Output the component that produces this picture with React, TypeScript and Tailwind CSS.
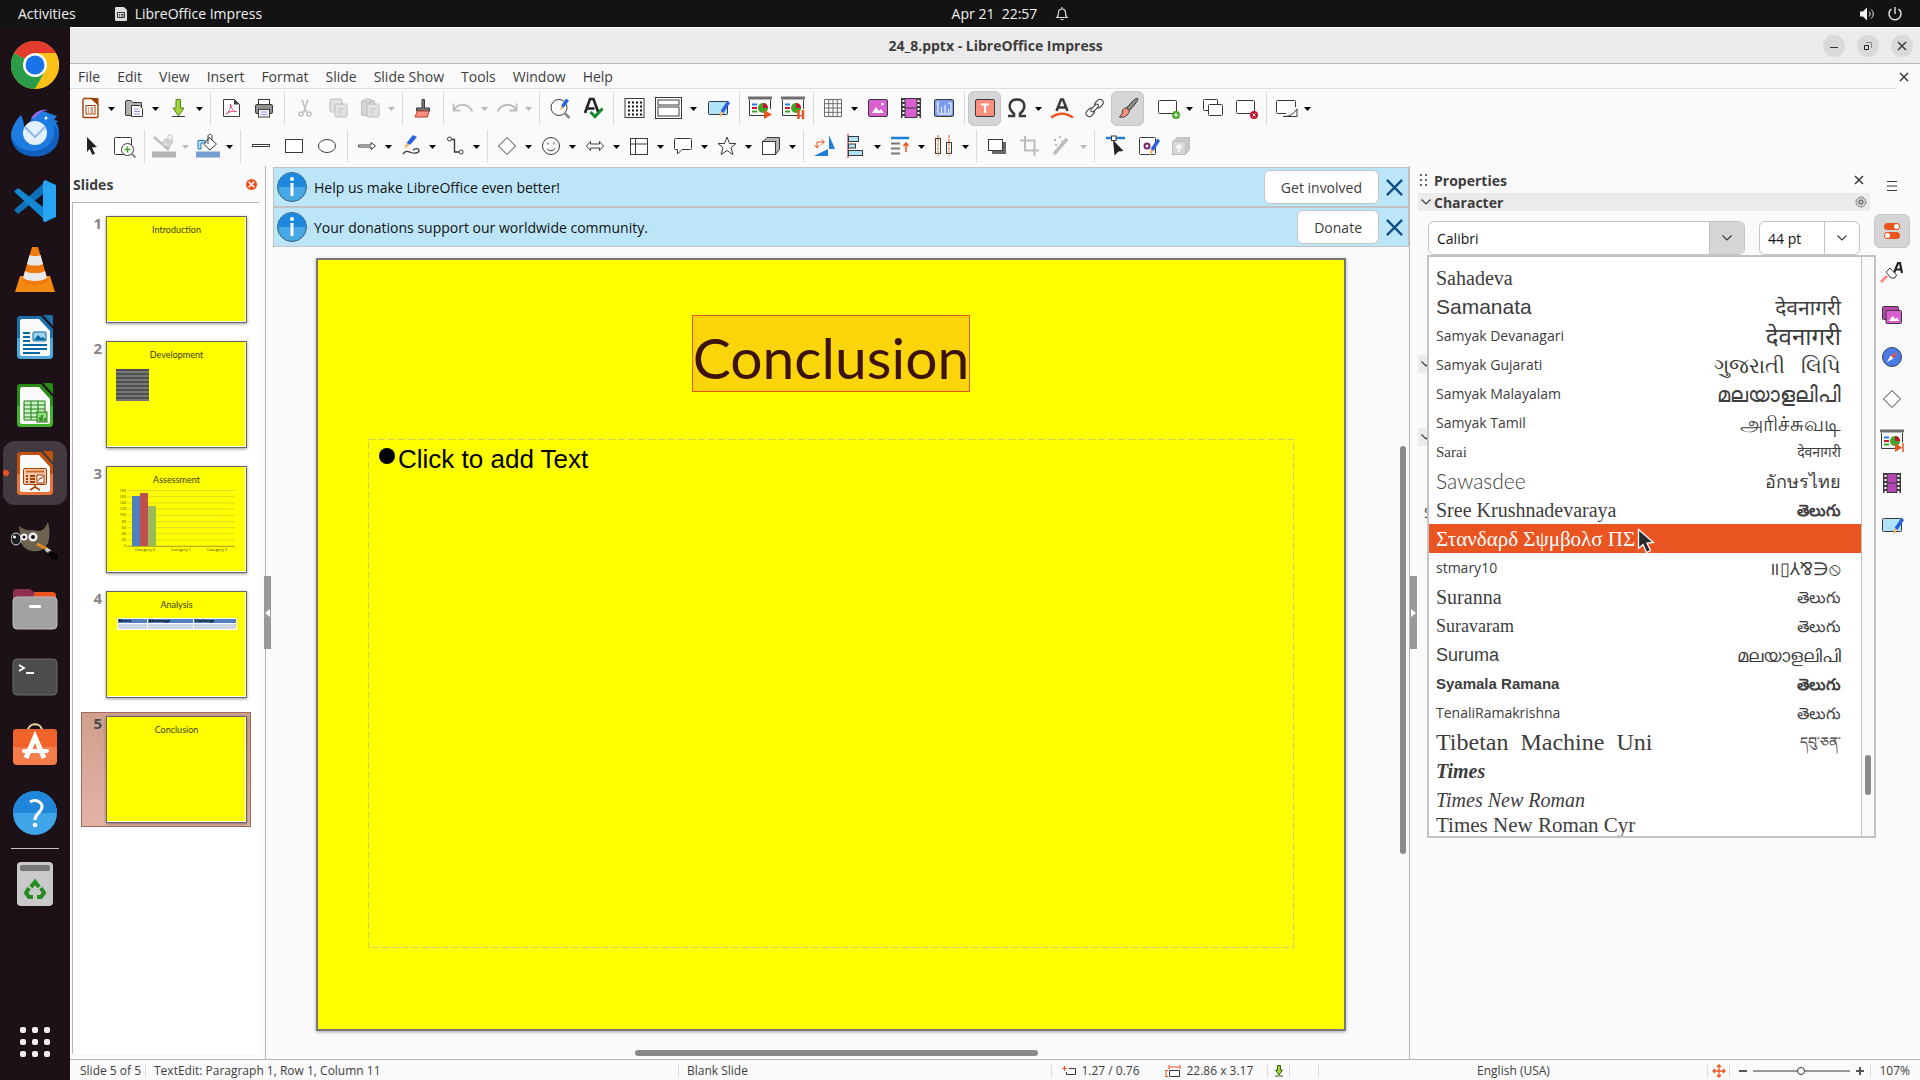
import type { ReactNode } from "react";

const INK = "#3a3a38";
const MUTE = "#bdbdbd";
const BLUE = "#1e7fd6";
const ORANGE = "#e95420";

/* ---------- toolbar glyphs, 24x24 ---------- */

const pencil = (
  <g>
    <path d="M21.5 4.5 24 7l-6.5 10-3-2z" fill="#2a62de" />
    <path d="m14.500 15 3 2-4 5z" fill="#f7b56b" />
  </g>
);

const board = (
  <g>
    <path d="M0 2h24" stroke="#6e6e6e" strokeWidth="3" />
    <path d="M1.500 4v15.500h19M22.500 4v9" stroke={INK} />
    <path d="M4 8.500h5" stroke={BLUE} strokeWidth="2" />
    <path d="M4 12h5" stroke="#c8102e" strokeWidth="2" />
    <path d="M4 15.500h5" stroke="#3fa525" strokeWidth="2" />
    <circle cx="15" cy="12" r="5" fill="#3fa525" />
    <path d="M15 12V7a5 5 0 0 1 5 5z" fill="#c8102e" />
  </g>
);

const docBack = (x: number, y: number) => (
  <rect x={x} y={y} width="12" height="13" rx="1.500" fill="#e2e2e2" stroke={MUTE} />
);

const GLYPHS: Record<string, ReactNode> = {
  new: (
    <g stroke="#a33e03">
      <path d="M6 2.500h8l6 6V20a1.500 1.500 0 0 1-1.500 1.500h-12A1.500 1.500 0 0 1 5 20V4z" fill="#fff" strokeWidth="1.400" />
      <path d="M13 2.500h7v6z" fill="#a33e03" />
      <rect x="8" y="9.500" width="9" height="8.500" />
      <path d="M10 12h1m1.500 0H15m-5 2h1m1.500 0H15m-5 2h1m1.500 0H15" />
    </g>
  ),
  open: (
    <g>
      <path d="M3.500 19V6A1.500 1.500 0 0 1 5 4.500h4l2 2h8.500V18a1.500 1.500 0 0 1-1.500 1.500H4z" fill="#b0b0b0" stroke={INK} />
      <path d="M9.500 9.500h8l3 3v8h-11z" fill="#fff" stroke={INK} />
      <path d="M12 13h4m-4 2.500h6m-6 2.500h6" stroke="#8b8bea" />
    </g>
  ),
  save: (
    <g>
      <path d="M10 3.500h4.500V12h3.500l-5.500 8-5.500-8h3z" fill="#a1d636" stroke="#5b7d1e" />
      <path d="M6 20.500h13" stroke={INK} />
    </g>
  ),
  pdf: (
    <g>
      <path d="M4.500 3.500h11l5 5v12h-16z" fill="#fff" stroke={INK} strokeLinejoin="round" />
      <path d="M15 3.500v5h5z" fill={INK} />
      <path d="M7 18c3-2 5-6 4.500-10 1 5 3 7.500 6 7.500-4-.5-8 0-10.500 2.500z" stroke="#e8476a" />
    </g>
  ),
  print: (
    <g>
      <rect x="6.500" y="3.500" width="11" height="7" fill="#fff" stroke={INK} />
      <rect x="3.500" y="8.500" width="17" height="9" rx="1.500" fill="#8f8f8f" stroke={INK} />
      <rect x="6.500" y="13.500" width="11" height="7.500" fill="#fff" stroke={INK} />
      <path d="M8.500 16h7m-7 2.500h7" stroke="#8b8bea" />
    </g>
  ),
  cut: (
    <g stroke={MUTE} strokeWidth="1.500">
      <path d="m9 3.500 4.500 13M15 3.500l-4.500 13" />
      <circle cx="8" cy="18" r="2" />
      <circle cx="16" cy="18" r="2" />
    </g>
  ),
  copy: (
    <g>
      {docBack(4, 3)}
      {docBack(9, 8)}
      <path d="M12 13h6m-6 3h4" stroke={MUTE} />
    </g>
  ),
  paste: (
    <g>
      <rect x="3.500" y="4.500" width="13" height="15" rx="1.500" fill="#d5d5d5" stroke={MUTE} />
      <path d="M7.500 3h5v3h-5z" fill="#e2e2e2" stroke={MUTE} />
      {docBack(9, 8)}
      <path d="M12 13h6m-6 3h4" stroke={MUTE} />
    </g>
  ),
  brush: (
    <g stroke={INK}>
      <path d="M11 3.500h2.500V12h5v3h-13v-3H11z" fill="#777" />
      <path d="m6.500 15-2.500 6h12.500l1.500-6z" fill="#ff8f80" stroke="#b8402f" />
    </g>
  ),
  undo: <path d="M2.500 7.500v7h7M3 14c3-6 13-8.500 18.500 1.500" stroke={MUTE} strokeWidth="1.800" />,
  redo: <path d="M21.500 7.500v7h-7M21 14C18 8 8 5.500 2.500 15.500" stroke={MUTE} strokeWidth="1.800" />,
  find: (
    <g>
      <circle cx="11" cy="11.500" r="8" fill="#fff" stroke={INK} />
      <path d="m17 17.500 4.500 4.500" stroke="#888" strokeWidth="2.500" />
      <path d="m18 2.500 3 2-5.500 7.500-2.500-2z" fill="#2a62de" />
      <path d="m13 10 2.500 2-3.500 2.500z" fill="#f7b56b" />
    </g>
  ),
  spell: (
    <g>
      <path d="M4 17 9 3h3.500l5 14M6.500 12.500h7" stroke="#222" strokeWidth="2.600" />
      <path d="m9.500 16 4.500 4.500 7.500-8" stroke="#128a2a" strokeWidth="3" />
    </g>
  ),
  grid: (
    <g>
      <rect x="3" y="2.500" width="19" height="19" fill="#fff" stroke={INK} />
      <path d="M6 6.500h14M6 10.500h14M6 14.500h14M6 18.500h14" stroke="#111" strokeWidth="2" strokeDasharray="2 2" />
    </g>
  ),
  layout: (
    <g stroke={INK}>
      <rect x="-1.500" y="1.500" width="26" height="21" fill="#fff" />
      <rect x="1" y="4" width="21" height="5" />
      <rect x="1" y="11" width="21" height="9" />
    </g>
  ),
  master: (
    <g>
      <rect x="2.500" y="5.500" width="19" height="13" rx="1" fill="#aee3f8" stroke={INK} />
      {pencil}
    </g>
  ),
  present: (
    <g>
      {board}
      <path d="m16 14 8 4.500-8 4.500z" fill={ORANGE} />
    </g>
  ),
  presentHere: (
    <g>
      {board}
      <path d="M17.500 14v9M22 14v9" stroke={ORANGE} strokeWidth="2.500" />
    </g>
  ),
  table: (
    <path d="M3.500 3.500h17v17h-17zM3.500 7.700h17M3.500 12h17M3.500 16.300h17M7.700 3.500v17M12 3.500v17M16.300 3.500v17" fill="#fff" stroke="#6a6a68" />
  ),
  image: (
    <g>
      <rect x="2.500" y="3.500" width="19" height="17" rx="1.500" fill="#d95fd0" stroke={INK} />
      <path d="m6 17 4-6 3 4 2-2 3 4z" fill="#fff" />
      <circle cx="16.500" cy="8" r="1.500" fill="#fff" />
    </g>
  ),
  video: (
    <g>
      <rect x="2.500" y="2.500" width="19" height="19" fill="#d95fd0" stroke={INK} />
      <path d="M2.500 12h19" stroke={INK} />
      <path d="M4.500 3v18M19.500 3v18" stroke={INK} strokeWidth="4" />
      <path d="M4.500 4v18M19.500 4v18" stroke="#fff" strokeWidth="2" strokeDasharray="2 2" />
    </g>
  ),
  chart: (
    <g>
      <rect x="2.500" y="3.500" width="19" height="17" rx="1.500" fill="#7c9cf2" stroke={INK} />
      <path d="M6 5v13h13M4.500 8h1.500M4.500 15H6M9.500 18v-7M13 18V9M16.500 18v-5M16 7h3v11" stroke="#fff" />
    </g>
  ),
  textbox: (
    <g>
      <rect x="2.500" y="3.500" width="19" height="17" rx="1.500" fill="#ff9080" stroke={INK} />
      <path d="M8 8.500h8M12 8.500V17" stroke="#fff" strokeWidth="2" />
    </g>
  ),
  omega: (
    <path d="M3 20h6v-2.500C2 12 4 3.500 12 3.500s10 8.500 3 14V20h6" stroke={INK} strokeWidth="2.500" />
  ),
  fontwork: (
    <g>
      <path d="M6.500 15 11 3.500h2L17.500 15M8.500 11.500h7" stroke={INK} strokeWidth="2.500" />
      <path d="M1 21.500c7-5 15-5 22 0" stroke={ORANGE} strokeWidth="2.200" />
    </g>
  ),
  link: (
    <g stroke={INK} transform="rotate(-45 12 12)">
      <rect x="1" y="8.500" width="9" height="6.500" rx="3.200" />
      <rect x="13.500" y="8.500" width="9" height="6.500" rx="3.200" />
      <rect x="7" y="10" width="9.500" height="3.500" rx="1.700" fill="#fafafa" />
    </g>
  ),
  paint: (
    <g stroke={INK}>
      <path d="M21.500 2.500c1 1 0 3-8 12l-3-2.500c7-8 10-10.500 11-9.500z" fill="#888" />
      <path d="M10.500 12c-3 0-4.500 2-4 5l-3 4c4 1 9-1 10-6.500z" fill="#ff9080" />
    </g>
  ),
  slideNew: (
    <g>
      <rect x="2.500" y="4.500" width="18" height="13" rx="1" fill="#fff" stroke={INK} />
      <circle cx="20" cy="19" r="4" fill="#3fa525" />
      <path d="M17.500 19h5M20 16.500v5" stroke="#fff" />
    </g>
  ),
  slideDup: (
    <g fill="#fff" stroke={INK}>
      <rect x="2.500" y="3.500" width="14" height="11" rx="1" />
      <rect x="7.500" y="8.500" width="14" height="11" rx="1" />
    </g>
  ),
  slideDel: (
    <g>
      <rect x="2.500" y="4.500" width="18" height="13" rx="1" fill="#fff" stroke={INK} />
      <circle cx="20" cy="19" r="4" fill="#c8102e" />
      <path d="m18.500 17.500 3 3m0-3-3 3" stroke="#fff" />
    </g>
  ),
  slideLayout: (
    <g fill="#fff" stroke={INK}>
      <path d="M12 17.500H3.500a1 1 0 0 1-1-1v-11a1 1 0 0 1 1-1h17a1 1 0 0 1 1 1V11" />
      <path d="M9 20.500c7 0 10-2 14-7.500v7.500z" />
    </g>
  ),
  select: <path d="m8 3 10 10-5 .5 3 6-2.500 1.500-3-6L8 18z" fill="#222" />,
  zoom: (
    <g stroke={INK}>
      <rect x="2.500" y="3.500" width="17" height="17" rx="1" fill="#fff" />
      <circle cx="15.500" cy="15.500" r="6" fill="#fff" />
      <path d="m20 20 3.500 3.500" stroke="#888" strokeWidth="2" />
      <path d="M15.500 12.500v6M12.500 15.500h6" stroke="#3fa525" strokeWidth="1.500" />
    </g>
  ),
  noLine: (
    <g>
      <path d="m2 3 15 13" stroke={MUTE} strokeWidth="2.500" />
      <path d="m13 5 8 2-4 7-7-3z" fill="#d8d8d8" stroke={MUTE} />
      <path d="M16 9V2.500c0-2 4-2 4 0V6" stroke={MUTE} />
      <path d="M0 20.500h24" stroke="#b4b4b4" strokeWidth="6" />
    </g>
  ),
  fill: (
    <g>
      <path d="M2 15V6.500h7V9H5v6z" fill="#aee3f8" stroke="#2a7ab0" />
      <path d="m13 3.500 7.500 6.500L14 16 8 10.500z" fill="#fff" stroke={INK} />
      <path d="M12 10V2c0-2 4-2 4 0v4" stroke={INK} />
      <path d="M0 20.500h24" stroke="#729fcf" strokeWidth="6" />
    </g>
  ),
  line: <rect x="3.500" y="10.500" width="17" height="2" fill="#fff" stroke={INK} />,
  rect: <rect x="3.500" y="5.500" width="17" height="13" fill="#fff" stroke={INK} />,
  ellipse: <ellipse cx="12" cy="12" rx="8.500" ry="6.500" fill="#fff" stroke={INK} />,
  arrow: <path d="M3.500 11v2H16v2.500L20.500 12 16 8.500V11z" fill="#fff" stroke={INK} />,
  curve: (
    <g>
      <path d="m14 1 4 2-7 8-3.500-2z" fill="#2a62de" />
      <path d="M7.500 9 11 11l-6 4z" fill="#f7b56b" />
      <path d="M4 20c3-4 5-2.500 8-1.500s8 1 8-2-5-2-6 0" stroke={INK} strokeWidth="1.300" />
    </g>
  ),
  connector: (
    <g stroke={INK}>
      <circle cx="6.500" cy="5" r="2" />
      <circle cx="18" cy="18" r="2" />
      <path d="M8.500 5.500h3V18H16" strokeWidth="1.400" />
    </g>
  ),
  diamond: <path d="m12 3.500 8.500 8.500-8.500 8.500L3.500 12z" fill="#fff" stroke={INK} />,
  smiley: (
    <g stroke={INK}>
      <circle cx="12" cy="12" r="8.500" fill="#fff" />
      <path d="M8 14.500c1.500 3 6.500 3 8 0M9 8.500v2M15 8.500v2" />
    </g>
  ),
  dblArrow: <path d="m3.500 12 4-4.500V10h9V7.500l4 4.500-4 4.500V14h-9v2.500z" fill="#fff" stroke={INK} />,
  flow: (
    <g stroke={INK}>
      <rect x="3.500" y="4.500" width="17" height="16" fill="#fff" />
      <path d="M8.500 4.500v16M3.500 10h17" />
    </g>
  ),
  callout: <path d="M4.500 4.500h15a1 1 0 0 1 1 1v9a1 1 0 0 1-1 1H11l-4.500 4.500V15.500h-2a1 1 0 0 1-1-1v-9a1 1 0 0 1 1-1z" fill="#fff" stroke={INK} />,
  star: <path d="m12 3 2.500 6.500h6.500l-5 4.200 2 6.800-6-4-6 4 2-6.800-5-4.200h6.500z" fill="#fff" stroke={INK} />,
  cube: (
    <g stroke={INK}>
      <path d="M4 7.500 8 3.500h12.500v12l-4 5z" fill="#b4b4b4" />
      <rect x="3.500" y="7.500" width="13" height="13" fill="#fff" />
    </g>
  ),
  rotate: (
    <g fill={BLUE}>
      <path d="M17 1v14h6z" />
      <path d="M2 22h14v-7z" />
      <path d="M5 13V8h7M9.500 5.500 12.500 8l-3 2.500M2.500 11 5 14l2.500-3" fill="none" stroke={ORANGE} />
    </g>
  ),
  align: (
    <g stroke={INK} fill="#aee3f8">
      <path d="M4 0v24" stroke="#c8102e" />
      <rect x="4.500" y="2.500" width="10" height="5" />
      <rect x="4.500" y="10" width="7" height="4" />
      <rect x="4.500" y="16.500" width="14" height="5" />
    </g>
  ),
  arrange: (
    <g>
      <path d="M3 4h18" stroke={BLUE} strokeWidth="2.500" />
      <path d="M3 9.500h9M3 14.500h9M3 19.500h9" stroke="#777" strokeWidth="2" />
      <path d="M18 18V9m-2.500 3L18 9l2.500 3" stroke={ORANGE} strokeWidth="1.500" />
    </g>
  ),
  distribute: (
    <g>
      <rect x="3.500" y="4.500" width="5" height="15" fill="#fff" stroke={INK} />
      <rect x="14.500" y="8.500" width="5" height="11" fill="#fff" stroke={INK} />
      <path d="M6 1v21M17 1v21" stroke={ORANGE} strokeDasharray="3 1" />
    </g>
  ),
  shadow: (
    <g>
      <rect x="7" y="8" width="14" height="12" fill="#666" />
      <rect x="3.500" y="5.500" width="14" height="11" fill="#fff" stroke={INK} />
    </g>
  ),
  crop: <path d="M7 2v14.500h14M2 6.500h14.500V22" stroke={MUTE} strokeWidth="2" />,
  filter: (
    <g stroke={MUTE}>
      <path d="M4 20 17 5" strokeWidth="3.500" />
      <path d="M4 6h2m3-3h2M5 11h2m4-4h1" strokeWidth="2" />
    </g>
  ),
  points: (
    <g>
      <path d="M3 4h19" stroke={BLUE} strokeWidth="2.500" />
      <rect x="8.500" y="2" width="4.500" height="4.500" fill="#fff" stroke={INK} />
      <path d="m10 6 10.500 11-5 .5-4 4z" fill="#222" />
    </g>
  ),
  glue: (
    <g>
      <rect x="3.500" y="3.500" width="16" height="17" rx="1" fill="#fff" stroke={INK} />
      <circle cx="11" cy="12" r="2.500" stroke="#7a1f6b" strokeWidth="2" />
      {pencil}
    </g>
  ),
  extrude: (
    <g stroke={MUTE}>
      <path d="M4 7.500 8 3.500h12.500v12l-4 5z" fill="#c8c8c8" />
      <rect x="3.500" y="7.500" width="13" height="13" fill="#d8d8d8" />
      <path d="M10 18v-7m-3 3 3-3 3 3" stroke="#fff" strokeWidth="1.500" />
    </g>
  ),
  toggles: (
    <g>
      <rect x="4" y="4" width="16" height="7" rx="3.500" fill={ORANGE} />
      <circle cx="16.500" cy="7.500" r="2.500" fill="#fff" />
      <rect x="4" y="13" width="16" height="7" rx="3.500" fill={ORANGE} />
      <circle cx="7.500" cy="16.500" r="2.500" fill="#fff" />
    </g>
  ),
  styles: (
    <g>
      <path d="m14 12 4-10h2l2 10M15.500 8.500h5" stroke="#222" strokeWidth="2.200" />
      <path d="m10 7-4 4 5 6h4l1.500-3z" fill="#fff" stroke={INK} />
      <path d="m7 15-6 6" stroke="#ff9080" strokeWidth="3" />
    </g>
  ),
  gallery: (
    <g>
      <rect x="2.500" y="3.500" width="16" height="13" rx="1" fill="#b848b0" stroke={INK} />
      <rect x="6" y="7.500" width="15.500" height="13" rx="1" fill="#d95fd0" stroke={INK} />
      <path d="m9 18 3.500-5 3 3 1.500-1.500 2 3.500z" fill="#fff" />
    </g>
  ),
  navigator: (
    <g>
      <circle cx="12" cy="12" r="9.500" fill="#4b7be8" stroke="#345" />
      <path d="m17 7-3.500 6.500-3-3z" fill="#f05030" />
      <path d="m7 17 3.500-6.500 3 3z" fill="#fff" />
    </g>
  ),
  transition: (
    <g>
      {board}
      <path d="m15 14 7 4.500-7 4.500z" fill={ORANGE} />
      <path d="M23 14v9" stroke={ORANGE} strokeWidth="1.500" />
    </g>
  ),
  animation: (
    <g>
      <rect x="3.500" y="2.500" width="17" height="19" fill="#b545b5" stroke={INK} />
      <path d="M3.500 12h17" stroke={INK} />
      <path d="M5.500 3v18M18.500 3v18" stroke={INK} strokeWidth="4" />
      <path d="M5.500 4v18M18.500 4v18" stroke="#fff" strokeWidth="2" strokeDasharray="2 2" />
    </g>
  ),
  menu: <path d="M7 7.500h10M7 12h10M7 16.500h10" stroke={INK} />,
};

function Glyph({ name }: { name: string }) {
  return (
    <svg viewBox="0 0 24 24" fill="none" className="size-6 overflow-visible">
      {GLYPHS[name]}
    </svg>
  );
}

function Caret({ disabled }: { disabled?: boolean }) {
  return (
    <svg viewBox="0 0 7 4" className="mt-[2px] h-1 w-[7px]">
      <path d="M0 0h7L3.500 4z" fill={disabled ? "#b8b8b8" : "#000"} />
    </svg>
  );
}

function Chevron() {
  return (
    <svg viewBox="0 0 10 6" fill="none" className="h-[6px] w-[10px]">
      <path d="m.5.500 4.500 4.500L9.500.500" stroke={INK} strokeWidth="1.200" />
    </svg>
  );
}

function Cross({ className, color = INK, width = 1.5 }: { className: string; color?: string; width?: number }) {
  return (
    <svg viewBox="0 0 10 10" className={className}>
      <path d="m1 1 8 8M9 1 1 9" stroke={color} strokeWidth={width} />
    </svg>
  );
}

/* "|" = separator, "_" = empty gap. Flags: v = has drop-down, w = wide, * = pressed, - = disabled drop-down */
const STANDARD =
  "new:v open:v save:v | pdf print | cut copy paste:v- | brush | undo:v- redo:v- | find spell | grid layout:wv master:w | present presentHere | table:v image video chart | textbox:* omega:v fontwork link paint:* _ slideNew:v slideDup slideDel | slideLayout:v";
const DRAWING =
  "select zoom | noLine:v- fill:v | line rect ellipse | arrow:v curve:v connector:v | diamond:v smiley:v dblArrow:v flow:v callout:v star:v cube:v | rotate align:v arrange:v distribute:v | shadow crop filter:v- | points glue extrude";

function Toolbar({ items, label }: { items: string; label: string }) {
  return (
    <div role="toolbar" aria-label={label} className="flex h-[38px] items-center">
      {items.split(" ").map((token, i) => {
        if (token === "_") return <span key={i} className="w-2" />;
        if (token === "|")
          return (
            <span key={i} className="flex h-[33px] w-2 justify-center">
              <span className="w-px bg-[#d9d9d9]" />
            </span>
          );
        const [name, flags = ""] = token.split(":");
        const drop = flags.includes("v");
        const width = flags.includes("w")
          ? drop ? "w-[37px]" : "w-[35px]"
          : drop ? "w-[31px]" : "w-[33px]";
        const pressed = flags.includes("*") ? "rounded-md border border-[#c6c6c6] bg-[#d5d5d5]" : "";
        return (
          <span key={i} className="flex items-center">
            <button aria-label={name} className={`flex h-[35px] items-center justify-center ${width} ${pressed}`}>
              <Glyph name={name} />
            </button>
            {drop && (
              <button aria-label={`${name} options`} className="flex h-[35px] w-[13px] items-center justify-center">
                <Caret disabled={flags.includes("-")} />
              </button>
            )}
          </span>
        );
      })}
    </div>
  );
}

/* ---------- desktop shell ---------- */

function TopBar() {
  return (
    <header className="grid h-[27px] grid-cols-3 items-center bg-[#131313] text-[14px] text-[#f0f0f0]">
      <div className="flex items-center pl-[18px]">
        <button>Activities</button>
        <svg viewBox="0 0 12 14" className="ml-[39px] h-[14px] w-3">
          <path d="M0 1a1 1 0 0 1 1-1h8l3 3v10a1 1 0 0 1-1 1H1a1 1 0 0 1-1-1z" fill="#ddd" />
          <path d="M2.500 5.500h7v5h-7zM4 7.500h1m1 0h2.500M4 9h1m1 0h2.500" fill="none" stroke="#333" />
        </svg>
        <span className="ml-2">LibreOffice Impress</span>
      </div>
      <div className="flex items-center justify-center gap-[18px] pl-[101px]">
        <span>Apr 21&nbsp; 22:57</span>
        <svg viewBox="0 0 14 16" fill="none" className="h-4 w-[14px]">
          <path d="M2 11.500h10c-1.500-1.500-1.500-3-1.500-5a3.500 3.500 0 0 0-7 0c0 2 0 3.500-1.500 5zM5.500 13.500h3M7 1v2" stroke="#ddd" strokeWidth="1.200" />
        </svg>
      </div>
      <div className="flex items-center justify-end gap-3 pr-[17px]">
        <svg viewBox="0 0 16 16" fill="none" className="h-4 w-4">
          <path d="M1 5.500h3L8 1.500v13l-4-4H1z" fill="#f2f2f2" />
          <path d="M10 5.500c1.500 1.500 1.500 3.500 0 5M12 3.500c3 2.500 3 6.500 0 9" stroke="#f2f2f2" />
        </svg>
        <svg viewBox="0 0 16 16" fill="none" className="h-4 w-4">
          <path d="M8 1v7M4.500 3a6 6 0 1 0 7 0" stroke="#f2f2f2" strokeWidth="1.300" />
        </svg>
      </div>
    </header>
  );
}

function OfficeDoc({ dark, light, children }: { dark: string; light: string; children: ReactNode }) {
  return (
    <g>
      <path d="M9 3h21l12 13v26a4 4 0 0 1-4 4H10a4 4 0 0 1-4-4V6a3 3 0 0 1 3-3z" fill={dark} />
      <path d="M6 25h36v17a4 4 0 0 1-4 4H10a4 4 0 0 1-4-4z" fill={light} />
      <path d="M11 6h17l11 12v23a2 2 0 0 1-2 2H11a2 2 0 0 1-2-2V8a2 2 0 0 1 2-2z" fill="#fafafa" />
      <path d="M32 2h8a2 2 0 0 1 2 2v9z" fill={dark} />
      {children}
    </g>
  );
}

const DOCK: { name: string; active?: boolean; art: ReactNode }[] = [
  {
    name: "Google Chrome",
    art: (
      <g>
        <circle cx="24" cy="24" r="24" fill="#fbc116" />
        <path d="M24 24 3.200 12A24 24 0 0 1 44.800 12z" fill="#e33b2e" />
        <path d="M24 24 3.200 12A24 24 0 0 0 24 48l10.400-18z" fill="#2c9c48" />
        <path d="M24 12h20.800A24 24 0 0 1 24 48l10.400-18z" fill="#fbc116" />
        <circle cx="24" cy="24" r="12" fill="#fff" />
        <circle cx="24" cy="24" r="9.500" fill="#1a73e8" />
      </g>
    ),
  },
  {
    name: "Thunderbird",
    art: (
      <g>
        <path d="M10 6C4 12 0 20 0 27c1 11 10 20 23 20s24-9 25-22c0-5-1-8-3-11l2-2-4-1 3-4-9-3C29 0 22 5 20 11l-7 8c0-5-1-9-3-13z" fill="#1e7be0" />
        <path d="M0 26c3 11 11 16 22 16 9 0 17-5 20-13 2-6 2-11 0-15 8 8 7 20 1 26-9 10-29 10-38 0-3-4-5-9-5-14z" fill="#1260bd" />
        <circle cx="24" cy="24" r="12" fill="#e3f0fd" />
        <path d="m14 18 10 10 10-10" fill="none" stroke="#8bb9ea" strokeWidth="2" />
        <path d="M20 10c3-7 10-10 17-9-6 1-10 4-12 7z" fill="#8f6be8" />
        <circle cx="35" cy="9" r="1.500" fill="#fff" />
      </g>
    ),
  },
  {
    name: "Visual Studio Code",
    art: (
      <g>
        <path d="M3 33 7 37 36 14V3z" fill="#0f6fb8" />
        <path d="M3 14.500 7 11l29 22v12z" fill="#1387d2" />
        <path d="m34 3 11 5v32l-11 5c-1 0-2-1-2-2V5z" fill="#27a4f2" />
      </g>
    ),
  },
  {
    name: "VLC media player",
    art: (
      <g>
        <path d="M9 31h30l5 16H4z" fill="#f58a12" />
        <path d="M21 2h6l10 34c-4 5-22 5-26 0z" fill="#ef7a0e" />
        <path d="m18.500 10-2.500 9c4 2 12 2 16 0l-2.500-9c-3 1.500-8 1.500-11 0zM14 26l-2 7c5 4 19 4 24 0l-2-7c-4 3-16 3-20 0z" fill="#e9e9e9" />
      </g>
    ),
  },
  {
    name: "LibreOffice Writer",
    art: (
      <OfficeDoc dark="#1c71ab" light="#4fa8dc">
        <path d="M12 20h7M12 24h7M12 28h7M12 32h24M12 36h24M12 40h17" stroke="#0369a3" strokeWidth="2" />
        <rect x="22" y="19" width="13" height="9" rx="1" fill="#9fd0f0" stroke="#0369a3" />
        <path d="m23 27 4-5 3 3 2-1 3 3z" fill="#0369a3" />
      </OfficeDoc>
    ),
  },
  {
    name: "LibreOffice Calc",
    art: (
      <OfficeDoc dark="#2a8a18" light="#43b12c">
        <path d="M13 20h21v19H13zM13 24h21M13 28h21M13 32h21M13 36h21M20 20v19M27 20v19" fill="#ccf4c6" stroke="#1f7a12" />
        <rect x="26" y="31" width="10" height="10" fill="#8fdd7d" stroke="#1f7a12" />
        <path d="M29 40v-4M31 40v-6M34 40v-3" stroke="#1f7a12" strokeWidth="1.500" />
      </OfficeDoc>
    ),
  },
  {
    name: "LibreOffice Impress",
    active: true,
    art: (
      <OfficeDoc dark="#c0500e" light="#e9743a">
        <rect x="12.500" y="19.500" width="23" height="16" rx="1.500" fill="#f6c9ae" stroke="#a33e03" />
        <path d="M15 22.500h18" stroke="#d2691e" strokeWidth="2" />
        <path d="M15 27h2m-2 3h2m-2 3h2m2-6h5m-5 3h5m-5 3h5" stroke="#a33e03" strokeWidth="2" />
        <path d="M26 26h7v8h-7zM27 32l2-3 1 1 2-3" fill="#fff" stroke="#a33e03" />
        <path d="M24 35v3l-5 3m5-3 5 3" stroke="#a33e03" strokeWidth="1.500" fill="none" />
      </OfficeDoc>
    ),
  },
  {
    name: "GIMP",
    art: (
      <g>
        <path d="M8 9c6 4 9 5 13 4l6 1c5 0 7-3 10-9 3 11 2 24-6 28-8 3-17 1-21-7z" fill="#6b6250" />
        <ellipse cx="5" cy="22" rx="5" ry="6" fill="#1b1e22" stroke="#ddd" />
        <circle cx="3.500" cy="20" r="1.500" fill="#fff" />
        <circle cx="13" cy="20" r="3.500" fill="#eee" />
        <circle cx="13" cy="20" r="1.500" fill="#111" />
        <circle cx="22" cy="20" r="4.500" fill="#eee" />
        <circle cx="22" cy="20" r="2" fill="#111" />
        <path d="m26 27 10 5" stroke="#e78a1b" strokeWidth="3" />
        <path d="m35 32 4 3" stroke="#ccc" strokeWidth="4" />
        <path d="m38 34 9 4-1 5c-4 0-8-3-9-6z" fill="#050505" />
      </g>
    ),
  },
  {
    name: "Files",
    art: (
      <g>
        <path d="M2 7a3 3 0 0 1 3-3h14l4 3h18a4 4 0 0 1 4 4v8H2z" fill="#8f2f52" />
        <path d="M24 7h17a4 4 0 0 1 4 4v8H20z" fill="#e95420" />
        <rect x="2" y="12" width="44" height="32" rx="4" fill="#a2a2a2" stroke="#bdbdbd" />
        <rect x="18" y="20" width="12" height="3" rx="1" fill="#fff" />
      </g>
    ),
  },
  {
    name: "Terminal",
    art: (
      <g>
        <rect x="2" y="6" width="44" height="36" rx="4" fill="#4c4c4c" stroke="#6a6a6a" />
        <path d="m8 12 5 3-5 3M15 20h8" fill="none" stroke="#fff" strokeWidth="1.800" />
      </g>
    ),
  },
  {
    name: "Ubuntu Software",
    art: (
      <g>
        <path d="M17 10c0-9 14-9 14 0" fill="none" stroke="#f7d9a5" strokeWidth="2" />
        <rect x="2" y="8" width="44" height="36" rx="4" fill="#f47c4b" />
        <path d="M2 26V12a4 4 0 0 1 4-4h36a4 4 0 0 1 4 4v14z" fill="#f2622b" />
        <path d="m15 37 9-21 9 21" fill="none" stroke="#fff" strokeWidth="5" />
        <path d="M13 30h23" stroke="#fff" strokeWidth="4" strokeLinecap="round" />
      </g>
    ),
  },
  {
    name: "Help",
    art: (
      <g>
        <circle cx="24" cy="24" r="22" fill="#3fa5e8" />
        <path d="M2 24a22 22 0 0 1 44 0z" fill="#1f86da" />
        <path d="M19 13c5-3 12-1 12 5 0 5-7 6-7 13" fill="none" stroke="#fff" strokeWidth="3" />
        <circle cx="24" cy="36" r="2.300" fill="#fff" />
      </g>
    ),
  },
];

function Dock() {
  return (
    <nav aria-label="Dock" className="flex w-[70px] shrink-0 flex-col items-center bg-[#1d1118] pt-[6px]">
      {DOCK.map((app) => (
        <button
          key={app.name}
          aria-label={app.name}
          className={`relative mb-1 flex size-16 items-center justify-center rounded-xl ${app.active ? "bg-[#433940]" : ""}`}
        >
          <svg viewBox="0 0 48 48" className="size-12">{app.art}</svg>
          {app.active && <span className="absolute left-0 size-[6px] rounded-full bg-[#e95420]" />}
        </button>
      ))}
      <span className="-mt-px h-px w-12 bg-[#c8c0c4]" />
      <button aria-label="Trash" className="mt-[11px]">
        <svg viewBox="0 0 48 48" className="size-12">
          <rect x="6" y="2" width="36" height="44" rx="4" fill="#c9c9c9" />
          <rect x="9" y="5" width="30" height="6" rx="2" fill="#777" />
          <g fill="none" stroke="#258a20" strokeWidth="4">
            <path d="m20 27 4-5 4 5" />
            <path d="m30 28 3 5-3 4h-4" />
            <path d="M22 37h-4l-3-4 3-5" />
          </g>
        </svg>
      </button>
      <button aria-label="Show Applications" className="mt-auto mb-[23px] grid grid-cols-3 gap-[6px]">
        {Array.from({ length: 9 }, (_, i) => (
          <span key={i} className="size-[6px] rounded-[2px] bg-[#f2f0ee]" />
        ))}
      </button>
    </nav>
  );
}

/* ---------- window chrome ---------- */

function TitleBar() {
  return (
    <div className="flex h-[37px] items-center border-t border-b border-t-white border-b-[#b8b8b8] bg-[#ebebeb] pr-[7px]">
      <h1 className="flex-1 pl-[98px] text-center text-[14px] font-bold text-[#3d3d3d]">
        24_8.pptx - LibreOffice Impress
      </h1>
      <div className="flex gap-3">
        <button aria-label="Minimize" className="flex size-[22px] items-center justify-center rounded-full bg-[#d9d9d9]">
          <span className="mt-1 h-px w-2 bg-[#333]" />
        </button>
        <button aria-label="Restore" className="flex size-[22px] items-center justify-center rounded-full bg-[#d9d9d9]">
          <svg viewBox="0 0 10 10" fill="none" className="size-[10px]">
            <path d="M3 1.500h5.500V7" stroke="#888" />
            <path d="M1.500 4.500h4v4h-4z" stroke="#222" />
          </svg>
        </button>
        <button aria-label="Close" className="flex size-[22px] items-center justify-center rounded-full bg-[#d9d9d9]">
          <Cross className="size-[10px]" />
        </button>
      </div>
    </div>
  );
}

const MENUS = ["File", "Edit", "View", "Insert", "Format", "Slide", "Slide Show", "Tools", "Window", "Help"];

function MenuBar() {
  return (
    <div className="flex h-[25px] items-center pr-[11px]">
      <div className="mr-[3px] flex h-full flex-1 items-center gap-[17px] border-b border-[#dedede] pl-2 text-[14px]">
        {MENUS.map((menu) => (
          <button key={menu}>{menu}</button>
        ))}
      </div>
      <button aria-label="Close document">
        <Cross className="size-[10px]" />
      </button>
    </div>
  );
}

/* ---------- slide panel ---------- */

function ChartThumb() {
  return (
    <svg viewBox="0 0 120 68" className="mx-auto h-[68px] w-[120px] font-['Open_Sans',sans-serif] text-[4px]">
      {[180, 160, 140, 120, 100, 80, 60, 40, 20, 0].map((tick, i) => (
        <g key={tick}>
          <path d={`M10 ${4.500 + i * 6.200}h108`} stroke={tick ? "#dcdc20" : "#a0a020"} strokeWidth="1" />
          <text x="9" y={5.500 + i * 6.200} textAnchor="end" fill="#555500">{tick}</text>
        </g>
      ))}
      <rect x="15" y="10" width="8" height="50" fill="#4f81bd" />
      <rect x="23" y="7" width="8" height="53" fill="#c0504d" />
      <rect x="31" y="20" width="8" height="40" fill="#9bbb59" />
      <text x="18" y="65" fill="#333300">Category 0</text>
      <text x="54" y="65" fill="#333300">Category 1</text>
      <text x="90" y="65" fill="#333300">Category 2</text>
    </svg>
  );
}

const SLIDES: { title: string; body?: ReactNode }[] = [
  { title: "Introduction" },
  {
    title: "Development",
    body: (
      <span className="mt-2 ml-[9px] h-8 w-[33px] bg-[repeating-linear-gradient(#505050_0_2px,#777_2px_4px)]" />
    ),
  },
  { title: "Assessment", body: <ChartThumb /> },
  {
    title: "Analysis",
    body: (
      <table className="mx-auto mt-[7px] w-[120px] border border-white text-left text-[4px] leading-[4px]">
        <thead>
          <tr className="bg-[#4f81bd] text-black">
            <th className="border border-white px-px">Metric</th>
            <th className="border border-white px-px">Advantage</th>
            <th className="border border-white px-px">Challenge</th>
          </tr>
        </thead>
        <tbody>
          <tr className="bg-[#d0d8e8]">
            <td className="h-[6px] border border-white" />
            <td className="border border-white" />
            <td className="border border-white" />
          </tr>
        </tbody>
      </table>
    ),
  },
  { title: "Conclusion" },
];

function SlidePanel() {
  return (
    <section className="flex w-[195px] shrink-0 flex-col pl-[2px]">
      <div className="flex h-9 items-center justify-between pr-2">
        <h2 className="pl-[1px] text-[14px] font-bold">Slides</h2>
        <button aria-label="Close pane" className="flex size-[11px] items-center justify-center rounded-full bg-[#e95420]">
          <Cross className="size-[7px]" color="#fff" width={2} />
        </button>
      </div>
      <ol className="mr-[6px] mb-[5px] flex-1 border-t border-l border-[#b5b5b5] bg-white pt-[9px] pl-2">
        {SLIDES.map((slide, i) => {
          const selected = i === SLIDES.length - 1;
          return (
            <li key={slide.title} className="mb-[10px]">
              <button
                className={`flex h-[115px] w-[170px] items-start border pt-[3px] text-left ${
                  selected ? "border-[#a06a5c] bg-linear-to-b from-[#cf9f90] to-[#e3b4a5]" : "border-transparent"
                }`}
              >
                <span className={`w-5 text-right text-[15px] leading-[14px] font-bold ${selected ? "text-[#4a4a4a]" : "text-[#858585]"}`}>
                  {i + 1}
                </span>
                <span className="ml-1 flex h-[107px] w-[141px] flex-col border border-[#666] bg-[#ffff00] pt-[7px] shadow-[0_1px_3px_#0006,inset_-1px_-1px_0_#fff]">
                  <span className="text-center font-['Lato',sans-serif] text-[9px] leading-3 text-[#3c3c00]">{slide.title}</span>
                  {slide.body}
                </span>
              </button>
            </li>
          );
        })}
      </ol>
    </section>
  );
}

/* ---------- editor ---------- */

function InfoBar({ text, action }: { text: string; action: string }) {
  return (
    <div className="flex h-10 items-center border border-[#c2c2c2] bg-[#bde5f8] pr-[4px] pl-[3px]">
      <svg viewBox="0 0 30 30" className="size-[30px]">
        <circle cx="15" cy="15" r="14.500" fill="#47a8e6" stroke="#3a5f7a" />
        <path d="M1 15a14 14 0 0 1 28 0z" fill="#2088dc" />
        <circle cx="15" cy="7" r="2" fill="#fff" />
        <path d="M15 11v13" stroke="#fff" strokeWidth="3" />
      </svg>
      <span className="ml-[7px] flex-1 text-[14px] text-[#111]">{text}</span>
      <button className="h-[34px] rounded-md border border-[#c6c6c6] bg-white px-4 text-[14px]">{action}</button>
      <button aria-label="Dismiss" className="ml-[6px]">
        <Cross className="size-[19px]" color="#0b4f8a" width={1.2} />
      </button>
    </div>
  );
}

function Editor() {
  return (
    <main className="flex min-w-0 flex-1 flex-col pt-px">
      <div className="pl-[7px]">
        <InfoBar text="Help us make LibreOffice even better!" action="Get involved" />
        <InfoBar text="Your donations support our worldwide community." action="Donate" />
      </div>
      <div className="flex flex-1">
        <div className="-ml-[2px] flex items-center">
          <button aria-label="Collapse slide panel" className="mt-[-81px] flex h-[73px] w-[7px] items-center bg-[#999]">
            <svg viewBox="0 0 7 8" className="h-2 w-[7px]">
              <path d="M6 0v8L1 4z" fill="#fff" />
            </svg>
          </button>
        </div>
        <div className="mt-[11px] mb-7 ml-[45px] flex flex-1 flex-col border-2 border-[#777] bg-[#ffff00] shadow-[0_1px_3px_#0005]">
          <div className="mx-auto mt-[55px] flex h-[77px] items-center border border-[#e3561c] bg-[#f9d50a] pt-[6px] font-['Lato',sans-serif] text-[57px] leading-[70px] text-[#3d1208]">
            Conclusion
          </div>
          <div className="relative mx-[50px] mt-[47px] mb-[81px] flex flex-1 items-start pt-[5px] pl-[11px] font-['Liberation_Sans',Arial,sans-serif] text-[26px] leading-[30px] text-black">
            <svg className="absolute inset-0 size-full">
              <rect width="100%" height="100%" fill="none" stroke="#cdcd6e" strokeWidth="2" strokeDasharray="7 3" />
            </svg>
            <span className="mt-1 mr-[3px] size-4 rounded-full bg-black" />
            Click to add Text
          </div>
        </div>
        <div className="flex w-[63px] justify-end pr-[3px]">
          <span className="mt-[199px] h-[408px] w-[6px] rounded-full bg-[#8a8a8a]" />
        </div>
      </div>
      <div className="relative">
        <span className="absolute right-[371px] bottom-[3px] h-[6px] w-[403px] rounded-full bg-[#8a8a8a]" />
      </div>
    </main>
  );
}

/* ---------- sidebar ---------- */

const FONTS: [string, string, string, string?][] = [
  ["Sahadeva", "font-['Liberation_Serif',serif] text-[20px]", ""],
  ["Samanata", "font-['Liberation_Sans',sans-serif] text-[21px]", "text-[21px]", "देवनागरी"],
  ["Samyak Devanagari", "text-[14px]", "text-[24px]", "देवनागरी"],
  ["Samyak Gujarati", "text-[14px]", "text-[21px]", "ગુજરાતી   લિપિ"],
  ["Samyak Malayalam", "text-[14px]", "text-[21px]", "മലയാളലിപി"],
  ["Samyak Tamil", "text-[14px]", "text-[21px]", "அரிச்சுவடி"],
  ["Sarai", "font-['Liberation_Serif',serif] text-[15px]", "text-[14px]", "देवनागरी"],
  ["Sawasdee", "font-['Lato',sans-serif] font-light text-[21px]", "text-[18px] font-light", "อักษรไทย"],
  ["Sree Krushnadevaraya", "font-['Liberation_Serif',serif] text-[20px]", "text-[16px] font-bold", "తెలుగు"],
  ["Στανδαρδ Σψμβολσ ΠΣ", "font-['Liberation_Serif',serif] text-[21px]", ""],
  ["stmary10", "text-[14px]", "text-[18px]", "॥▯⅄⅋∋⦸"],
  ["Suranna", "font-['Liberation_Serif',serif] text-[20px]", "text-[16px]", "తెలుగు"],
  ["Suravaram", "font-['Liberation_Serif',serif] text-[18px]", "text-[16px] font-medium", "తెలుగు"],
  ["Suruma", "font-['Liberation_Sans',sans-serif] text-[18px]", "text-[18px]", "മലയാളലിപി"],
  ["Syamala Ramana", "font-['Liberation_Sans',sans-serif] font-bold text-[15px]", "text-[16px] font-bold", "తెలుగు"],
  ["TenaliRamakrishna", "text-[14px]", "text-[16px]", "తెలుగు"],
  ["Tibetan  Machine  Uni", "font-['Liberation_Serif',serif] text-[24px]", "text-[14px]", "དབུ་ཅན་"],
  ["Times", "font-['Liberation_Serif',serif] text-[20px] font-bold italic", ""],
  ["Times New Roman", "font-['Liberation_Serif',serif] text-[20px] italic", ""],
  ["Times New Roman Cyr", "font-['Liberation_Serif',serif] text-[21px]", ""],
];

function FontList() {
  return (
    <div className="absolute top-full -left-px z-10 flex h-[583px] w-[449px] border-2 border-[#c3c3c3] bg-[#fafafa]">
      <ul role="listbox" aria-label="Fonts" className="flex-1 overflow-hidden border-r border-[#c3c3c3] bg-white pt-[6px]">
        {FONTS.map(([name, face, sampleFace, sample]) => {
          const selected = name.startsWith("Σ");
          return (
            <li
              key={name}
              role="option"
              aria-selected={selected}
              className={`flex h-[29px] items-center justify-between pr-5 pl-[7px] leading-[22px] whitespace-pre last:h-[22px] ${
                selected ? "bg-[#e95420] text-white" : "text-[#3d3d3d]"
              }`}
            >
              <span className={face}>
                <span className="leading-[22px]">{name}</span>
              </span>
              {sample && <span className={sampleFace}>{sample}</span>}
            </li>
          );
        })}
      </ul>
      <div className="flex w-3 justify-center">
        <span className="mt-[498px] h-10 w-[6px] rounded-full bg-[#8a8a8a]" />
      </div>
      {/* mouse pointer */}
      <svg viewBox="0 0 18 26" className="absolute top-[271px] left-[208px] h-[26px] w-[18px]">
        <path d="M1.500 1.500v19l4.500-4 3.500 8 4-2-3.500-7.500 6.500-.500z" fill="#2b2b2b" stroke="#fff" strokeWidth="1.300" />
      </svg>
    </div>
  );
}

function SectionHeader({ children }: { children?: ReactNode }) {
  return (
    <div className="flex h-[18px] items-center bg-[#ebebeb] pr-[3px] pl-[3px]">
      <Chevron />
      {children}
    </div>
  );
}

function Sidebar() {
  return (
    <aside className="flex w-[511px] shrink-0 border-l border-[#b5b5b5]">
      <div className="flex items-center">
        <button aria-label="Collapse sidebar" className="flex h-[73px] w-[7px] items-center bg-[#999]">
          <svg viewBox="0 0 7 8" className="h-2 w-[7px]">
            <path d="M1 0v8l5-4z" fill="#fff" />
          </svg>
        </button>
      </div>
      <div className="ml-px flex flex-1 flex-col">
        <div className="flex h-[27px] items-center pt-px pr-[6px] pl-[2px]">
          <svg viewBox="0 0 8 13" className="h-[13px] w-2" fill="#666">
            <path d="M0 0h2v2H0zM5 0h2v2H5zM0 5h2v2H0zM5 5h2v2H5zM0 10h2v2H0zM5 10h2v2H5z" />
          </svg>
          <h2 className="ml-[6px] flex-1 text-[14px] font-bold">Properties</h2>
          <button aria-label="Close sidebar deck">
            <Cross className="size-[10px]" />
          </button>
        </div>
        <SectionHeader>
          <h3 className="ml-[3px] flex-1 text-[14px] font-bold">Character</h3>
          <button aria-label="More options">
            <svg viewBox="0 0 12 12" fill="none" className="size-3">
              <circle cx="6" cy="6" r="5" fill="#ccc" stroke="#666" strokeDasharray="2 1" />
              <circle cx="6" cy="6" r="2" stroke="#555" />
            </svg>
          </button>
        </SectionHeader>
        <div className="relative mt-[10px] mr-[10px] ml-[10px] flex">
          <div className="flex h-[34px] flex-1 rounded-md border border-[#c3c3c3] bg-white">
            <input aria-label="Font name" defaultValue="Calibri" className="min-w-0 flex-1 bg-transparent pl-2 text-[14px] text-[#111] outline-none" />
            <button aria-label="Show fonts" className="flex w-[35px] items-center justify-center rounded-r-md border-l border-[#c3c3c3] bg-[#d5d5d5]">
              <Chevron />
            </button>
          </div>
          <div className="ml-[14px] flex h-[34px] w-[101px] rounded-md border border-[#c3c3c3] bg-white">
            <input aria-label="Font size" defaultValue="44 pt" className="min-w-0 flex-1 bg-transparent pl-2 text-[14px] text-[#111] outline-none" />
            <button aria-label="Show sizes" className="flex w-[35px] items-center justify-center border-l border-[#c3c3c3]">
              <Chevron />
            </button>
          </div>
          <FontList />
        </div>
        <div className="mt-[100px]">
          <SectionHeader />
        </div>
        <div className="mt-[55px]">
          <SectionHeader />
        </div>
        <span className="mt-[56px] ml-[6px] text-[14px]">S</span>
      </div>
      <div role="tablist" aria-label="Sidebar decks" className="flex w-[50px] flex-col items-center pt-[3px] pr-[6px]">
        {["menu", "toggles", "styles", "gallery", "navigator", "diamond", "transition", "animation", "master"].map((tab) => (
          <button
            key={tab}
            role="tab"
            aria-selected={tab === "toggles"}
            aria-label={tab}
            className={`flex h-[34px] w-9 items-center justify-center ${tab === "menu" ? "mb-[11px]" : "mb-2"} ${
              tab === "toggles" ? "rounded-md border border-[#c6c6c6] bg-[#d5d5d5]" : ""
            }`}
          >
            <Glyph name={tab} />
          </button>
        ))}
      </div>
    </aside>
  );
}

/* ---------- status bar ---------- */

function StatusBar() {
  return (
    <footer className="flex h-[21px] items-center border-t border-[#b5b5b5] px-[10px] pt-px text-[12px]">
      <span className="w-[65px]">Slide 5 of 5</span>
      <span className="h-[14px] w-[533px] border-l border-[#dcdcdc] pl-2 leading-[14px]">
        TextEdit: Paragraph 1, Row 1, Column 11
      </span>
      <span className="h-[14px] flex-1 border-l border-[#dcdcdc] pl-2 leading-[14px]">Blank Slide</span>
      <span className="flex h-[14px] w-[106px] items-center gap-[5px] border-l border-[#dcdcdc] pl-[10px]">
        <svg viewBox="0 0 14 10" fill="none" className="h-[10px] w-[14px]">
          <path d="M7 2.500h6.500v6h-9V6" stroke={INK} />
          <path d="M0 2.500h5M2.500 0v5" stroke={ORANGE} />
        </svg>
        1.27 / 0.76
      </span>
      <span className="flex h-[14px] w-[110px] items-center gap-[5px] pl-2">
        <svg viewBox="0 0 16 12" fill="none" className="h-3 w-4">
          <path d="M4.500 5.500h10v6h-10z" stroke={INK} />
          <path d="M4 2h11M4 0v4M15 0v4M1 5.500v6M0 5.500h3M0 11.500h3" stroke={ORANGE} />
        </svg>
        22.86 x 3.17
      </span>
      <span className="flex h-[14px] w-[22px] items-center justify-center border-l border-[#dcdcdc]">
        <svg viewBox="0 0 8 12" className="h-3 w-2">
          <path d="M2.500.500h3V5H7.500L4 10 .5 5h2zM0 11h8" fill="#a1d636" stroke="#3c5a10" />
        </svg>
      </span>
      <span className="h-[14px] w-[29px] border-l border-[#dcdcdc]" />
      <span className="h-[14px] w-[389px] border-l border-[#dcdcdc] text-center leading-[14px]">English (USA)</span>
      <span className="flex h-[14px] w-[23px] items-center justify-center border-x border-[#dcdcdc]">
        <svg viewBox="0 0 14 14" fill="none" className="size-[14px]">
          <path d="M7 1v12M1 7h12M5 3l2-2 2 2M5 11l2 2 2-2M3 5 1 7l2 2M11 5l2 2-2 2" stroke={ORANGE} strokeWidth="1.300" />
        </svg>
      </span>
      <button aria-label="Zoom out" className="ml-[9px] flex h-3 w-2 items-center">
        <span className="h-[2px] w-2 bg-[#555]" />
      </button>
      <label className="mx-[6px] flex items-center">
        <input
          type="range"
          aria-label="Zoom"
          defaultValue={49}
          className="h-[2px] w-[97px] appearance-none bg-[#999] [&::-webkit-slider-thumb]:size-2 [&::-webkit-slider-thumb]:appearance-none [&::-webkit-slider-thumb]:rounded-full [&::-webkit-slider-thumb]:border [&::-webkit-slider-thumb]:border-[#333] [&::-webkit-slider-thumb]:bg-white"
        />
      </label>
      <button aria-label="Zoom in" className="flex items-center">
        <svg viewBox="0 0 8 8" className="size-2">
          <path d="M4 0v8M4 0M0 4h8" stroke="#555" strokeWidth="2" />
        </svg>
      </button>
      <span className="ml-[6px] h-[14px] border-l border-[#dcdcdc] pl-2 leading-[14px]">107%</span>
    </footer>
  );
}

export default function App() {
  return (
    <div className="flex h-screen flex-col overflow-hidden bg-[#fafafa] font-['Open_Sans','Noto_Sans',sans-serif] text-[#3d3d3d]">
      <TopBar />
      <div className="flex min-h-0 flex-1">
        <Dock />
        <div className="flex min-w-0 flex-1 flex-col">
          <TitleBar />
          <MenuBar />
          <div className="pb-px pl-1">
            <Toolbar items={STANDARD} label="Standard" />
            <Toolbar items={DRAWING} label="Drawing" />
          </div>
          <div className="flex min-h-0 flex-1">
            <SlidePanel />
            <div className="flex min-w-0 flex-1 border-l border-[#b5b5b5]">
              <Editor />
              <Sidebar />
            </div>
          </div>
          <StatusBar />
        </div>
      </div>
    </div>
  );
}
